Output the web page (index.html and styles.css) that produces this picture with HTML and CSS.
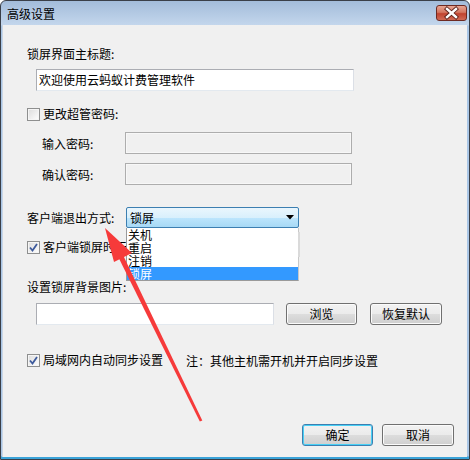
FILE: index.html
```html
<!DOCTYPE html>
<html lang="zh-CN">
<head>
<meta charset="utf-8">
<title>高级设置</title>
<link rel="stylesheet" href="styles.css">
</head>
<body>
<div class="window">
  <div class="titlebar">
    <span class="title">高级设置</span>
    <div class="close">
      <svg width="31" height="16" viewBox="0 0 31 16">
        <path d="M11 4 L20 12 M20 4 L11 12" stroke="#5a1f18" stroke-width="4.2" stroke-linecap="square"/>
        <path d="M11 4 L20 12 M20 4 L11 12" stroke="#ffffff" stroke-width="2.4" stroke-linecap="square"/>
      </svg>
    </div>
  </div>
  <div class="content">
    <div class="line l-title">锁屏界面主标题:</div>
    <div class="textbox tb-title">欢迎使用云蚂蚁计费管理软件</div>

    <div class="check c-pwd">
      <span class="box"></span><span>更改超管密码:</span>
    </div>
    <div class="field f-pwd1">
      <span class="flabel">输入密码:</span>
      <div class="textbox disabled tb-pwd"></div>
    </div>
    <div class="field f-pwd2">
      <span class="flabel">确认密码:</span>
      <div class="textbox disabled tb-pwd"></div>
    </div>

    <div class="field f-exit">
      <span class="elabel">客户端退出方式:</span>
      <div class="combo">
        <span>锁屏</span>
        <svg class="caret" width="8" height="5" viewBox="0 0 8 5"><path d="M0 0 H8 L4 4.5 Z" fill="#000"/></svg>
      </div>
    </div>

    <div class="check c-lock">
      <span class="box checked">
        <svg width="11" height="11" viewBox="0 0 11 11"><path d="M2 5.5 L4.5 8.5 L9 2" fill="none" stroke="#3d5a9c" stroke-width="1.8"/></svg>
      </span><span>客户端锁屏时无重启动</span>
    </div>

    <div class="line l-bg">设置锁屏背景图片:</div>
    <div class="field f-bg">
      <div class="textbox tb-bg"></div>
      <button class="btn b-browse">浏览</button>
      <button class="btn b-reset">恢复默认</button>
    </div>

    <div class="field f-sync">
      <div class="check">
        <span class="box checked">
          <svg width="11" height="11" viewBox="0 0 11 11"><path d="M2 5.5 L4.5 8.5 L9 2" fill="none" stroke="#3d5a9c" stroke-width="1.8"/></svg>
        </span><span>局域网内自动同步设置</span>
      </div>
      <span class="note">注：其他主机需开机并开启同步设置</span>
    </div>

    <div class="actions">
      <button class="btn focused">确定</button>
      <button class="btn">取消</button>
    </div>
  </div>

  <div class="dropdown">
    <div class="item">关机</div>
    <div class="item">重启</div>
    <div class="item">注销</div>
    <div class="item selected">锁屏</div>
  </div>
  <div class="behind"></div>

  <svg class="arrow" width="470" height="460" viewBox="0 0 470 460">
    <polygon points="122.5,254 118,256.5 199.8,421.5 202.3,420.5" fill="#f63a3a"/>
    <polygon points="105,228 132,253 114,262" fill="#f63a3a"/>
  </svg>
</div>
</body>
</html>
```

FILE: styles.css
```css
html, body {
  margin: 0;
  padding: 0;
}

body {
  width: 470px;
  height: 460px;
  overflow: hidden;
  font-family: "Noto Sans CJK SC", "Noto Sans", sans-serif;
  font-size: 12px;
  color: #000;
}

.window {
  position: relative;
  box-sizing: border-box;
  width: 470px;
  height: 460px;
  border: 1px solid #3a3f48;
  border-radius: 6px 6px 0 0;
  background: linear-gradient(#a3bcda, #c3d6ec 24px, #a9c6e6 25px, #a9c6e6 455px, #3aa3d8 456px);
  padding: 0 2px 2px 2px;
  display: flex;
  flex-direction: column;
}

.titlebar {
  height: 24px;
  display: flex;
  align-items: flex-start;
  padding-left: 4px;
}

.title {
  line-height: 16px;
  margin-top: 5px;
  color: #000;
}

.close {
  margin-left: auto;
  margin-right: 0;
  margin-top: 4px;
  width: 31px;
  height: 16px;
  box-sizing: border-box;
  border: 1px solid #6e2a22;
  border-radius: 3px;
  background: linear-gradient(#e8a593, #d47660 45%, #c1432f 55%, #d06a55);
  display: flex;
}

.close svg {
  margin: -1px;
}

.content {
  flex: 1;
  background: #f0f0f0;
  border-left: 1px solid #c9d6e6;
  margin-left: -1px;
  display: flex;
  flex-direction: column;
}

.line {
  height: 16px;
  line-height: 16px;
  margin-left: 24px;
  white-space: nowrap;
}

.l-title { margin-top: 21px; }

.textbox {
  box-sizing: border-box;
  height: 22px;
  background: #fff;
  border: 1px solid #abadb3;
  border-right-color: #dbdfe6;
  border-bottom-color: #e3e9ef;
  line-height: 20px;
  padding-left: 2px;
  white-space: nowrap;
}

.tb-title {
  margin-top: 7px;
  margin-left: 33px;
  width: 318px;
}

.textbox.disabled {
  background: #f0f0f0;
  border: 1px solid #adadad;
  box-shadow: inset 0 0 0 1px #f7f7f7;
}

.check {
  display: flex;
  align-items: center;
  height: 16px;
  line-height: 16px;
  white-space: nowrap;
}

.box {
  box-sizing: border-box;
  width: 13px;
  height: 13px;
  border: 1px solid #8e8f8f;
  background: linear-gradient(135deg, #dcdcdc, #f4f4f4 70%, #ffffff);
  box-shadow: inset 0 0 0 1px #f5f5f5;
  margin-right: 3px;
  display: flex;
  align-items: center;
  justify-content: center;
}

.c-pwd {
  margin-top: 15px;
  margin-left: 24px;
}

.field {
  display: flex;
  align-items: center;
  white-space: nowrap;
}

.flabel {
  width: 83px;
  margin-left: 39px;
}

.tb-pwd { width: 227px; }

.f-pwd1 { margin-top: 10px; }
.f-pwd2 { margin-top: 9px; }

.f-exit {
  margin-top: 22px;
  height: 21px;
}

.elabel {
  margin-left: 24px;
  width: 99px;
}

.combo {
  box-sizing: border-box;
  width: 173px;
  height: 21px;
  border: 1px solid #3c7fb1;
  border-radius: 2px;
  background: linear-gradient(#eaf6fd, #d9f0fc 50%, #bee6fd 50%, #a7d9f5);
  display: flex;
  align-items: center;
  padding-left: 3px;
  padding-right: 4px;
}

.caret {
  margin-left: auto;
}

.c-lock {
  margin-top: 11px;
  margin-left: 24px;
}

.l-bg { margin-top: 24px; }

.f-bg {
  margin-top: 8px;
  height: 22px;
}

.tb-bg {
  margin-left: 33px;
  width: 238px;
}

.btn {
  box-sizing: border-box;
  height: 22px;
  padding: 0;
  font-family: inherit;
  font-size: 12px;
  color: #000;
  border: 1px solid #707070;
  border-radius: 3px;
  background: linear-gradient(#f2f2f2, #ebebeb 50%, #dddddd 50%, #cfcfcf);
  box-shadow: inset 0 0 0 1px #fbfbfb;
  line-height: 20px;
}

.b-browse {
  margin-left: 12px;
  width: 71px;
}

.b-reset {
  margin-left: 13px;
  width: 72px;
}

.f-sync {
  margin-top: 27px;
  margin-left: 24px;
  height: 16px;
}

.note {
  margin-left: 23px;
}

.actions {
  margin-top: 56px;
  margin-left: 299px;
  display: flex;
  gap: 9px;
}

.actions .btn { width: 72px; }

.actions .focused {
  width: 71px;
  border-color: #3c7fb1;
  box-shadow: inset 0 0 0 1px #48d0f5;
}

.dropdown {
  position: absolute;
  left: 125px;
  top: 227px;
  width: 173px;
  box-sizing: border-box;
  background: #fff;
  border: 1px solid #9a9a9a;
  border-top: none;
  border-right-color: #c8c8c8;
}

.item {
  height: 13px;
  line-height: 13px;
  padding-left: 1px;
}

.item.selected {
  background: #3399ff;
  color: #fff;
}

.behind {
  position: absolute;
  left: 297px;
  top: 231px;
  width: 2px;
  height: 25px;
  background: #dadada;
}

.arrow {
  position: absolute;
  left: -1px;
  top: -1px;
  pointer-events: none;
}
```
